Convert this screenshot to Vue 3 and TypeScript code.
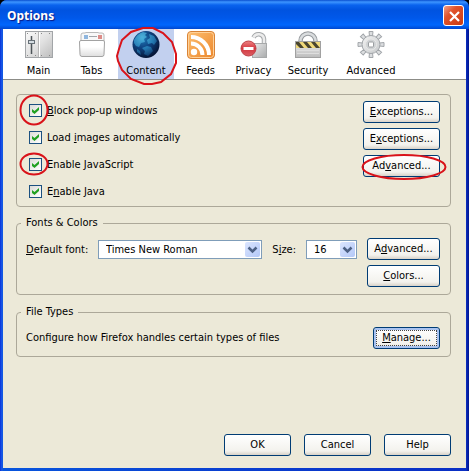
<script setup lang="ts">
import { ref } from 'vue'

type TabId = 'main' | 'tabs' | 'content' | 'feeds' | 'privacy' | 'security' | 'advanced'

interface Tab {
  id: TabId
  label: string
  size: 'small' | 'medium' | 'large'
}

// A label is split around its access key: [before, key, after]
type KeyLabel = [string, string, string]

interface Option {
  id: string
  label: KeyLabel
  mark?: 'round' | 'flat'
}

const tabs: Tab[] = [
  { id: 'main', label: 'Main', size: 'small' },
  { id: 'tabs', label: 'Tabs', size: 'small' },
  { id: 'content', label: 'Content', size: 'medium' },
  { id: 'feeds', label: 'Feeds', size: 'small' },
  { id: 'privacy', label: 'Privacy', size: 'small' },
  { id: 'security', label: 'Security', size: 'medium' },
  { id: 'advanced', label: 'Advanced', size: 'large' },
]

const options: Option[] = [
  { id: 'popups', label: ['', 'B', 'lock pop-up windows'], mark: 'round' },
  { id: 'images', label: ['Load ', 'i', 'mages automatically'] },
  { id: 'script', label: ['Enable ', 'J', 'avaScript'], mark: 'flat' },
  { id: 'java', label: ['E', 'n', 'able Java'] },
]

const active = ref<TabId>('content')
const enabled = ref<string[]>(['popups', 'images', 'script', 'java'])
const font = ref('Times New Roman')
const size = ref('16')
</script>

<template>
  <main class="window">
    <header class="titlebar">
      <h1>Options</h1>
      <button class="close" type="button" aria-label="Close">
        <svg viewBox="0 0 21 21" width="21" height="21"><path d="M6 6l9 9M15 6l-9 9" stroke="#fff" stroke-width="2.2" /></svg>
      </button>
    </header>

    <nav class="toolbar">
      <button
        v-for="tab in tabs"
        :key="tab.id"
        type="button"
        class="tab"
        :class="[tab.size, { active: active === tab.id }]"
        @click="active = tab.id"
      >
        <svg v-if="tab.id === 'main'" class="icon" viewBox="0 0 28 28">
          <defs><linearGradient id="gm" x1="0" y1="0" x2="1" y2="1"><stop offset="0" stop-color="#fafafa" /><stop offset=".5" stop-color="#e2e2e2" /><stop offset="1" stop-color="#bcbcbc" /></linearGradient></defs>
          <rect x=".5" y=".5" width="27" height="26" fill="url(#gm)" stroke="#a2a5a8" />
          <path d="M13.500 1v25" stroke="#b5b5b5" /><path d="M14.500 1v25" stroke="#fff" />
          <path d="M6.500 5v18" stroke="#4e5559" stroke-width="1.500" />
          <rect x="3.500" y="9.500" width="6" height="3" fill="#d5dde2" stroke="#687178" />
          <path d="M2 2.500h1M10 2.500h1M16 2.500h1M24 2.500h1M2 24.500h1M10 24.500h1M16 24.500h1M24 24.500h1" stroke="#888" />
        </svg>
        <svg v-else-if="tab.id === 'tabs'" class="icon" viewBox="0 0 28 28">
          <defs><linearGradient id="gt" x1="0" y1="0" x2="0" y2="1"><stop offset=".4" stop-color="#fff" /><stop offset="1" stop-color="#dedede" /></linearGradient></defs>
          <path d="M3 10V4q0-2 2-2h2l1-.5h12l1 .5h3q2 0 2 2v6" fill="#f8f8f8" stroke="#b8b8b8" />
          <rect x="6" y="4" width="4" height="4" fill="#8fb6de" /><rect x="20" y="4" width="4" height="4" fill="#dd8c88" />
          <path d="M11 5.500h8" stroke="#a3a6aa" />
          <path d="M1.500 11q0-1.500 1.500-1.500h22q1.500 0 1.500 1.500l-.5 12.500q0 2-2 2h-20q-2 0-2-2z" fill="url(#gt)" stroke="#a2a2a2" />
        </svg>
        <svg v-else-if="tab.id === 'content'" class="icon" viewBox="0 0 28 28">
          <defs>
            <radialGradient id="gc" cx=".38" cy=".3" r=".72"><stop offset="0" stop-color="#1f78b5" /><stop offset=".45" stop-color="#0f4382" /><stop offset="1" stop-color="#051333" /></radialGradient>
            <radialGradient id="gl" gradientUnits="userSpaceOnUse" cx="10" cy="6" r="20"><stop offset="0" stop-color="#5cc6ea" /><stop offset=".6" stop-color="#2b8cc4" /><stop offset="1" stop-color="#12437a" /></radialGradient>
          </defs>
          <circle cx="14" cy="13.500" r="13.500" fill="url(#gc)" />
          <path d="M2 9Q5 3 11 1l4 1-2 2 2 2-3 2 1 3-4 1-2 4-3-1-2-3zM17 3l5 2 3 5-3 4-2-2-4 1-1-4 3-2zM15 15l4 1 2 4-5 5-4-2 1-3-3-3zM5 18l3 2 1 4-4-3z" fill="url(#gl)" opacity=".75" />
        </svg>
        <svg v-else-if="tab.id === 'feeds'" class="icon" viewBox="0 0 28 28">
          <defs><linearGradient id="gf" x1="0" y1="0" x2="1" y2="1"><stop offset="0" stop-color="#fdc073" /><stop offset="1" stop-color="#ec8529" /></linearGradient></defs>
          <rect x=".5" y=".5" width="27" height="27" rx="3.500" fill="url(#gf)" stroke="#d98336" />
          <rect x="1.500" y="1.500" width="25" height="25" rx="3" fill="none" stroke="#ffd29a" />
          <circle cx="7" cy="21" r="3.200" fill="#fff" />
          <path d="M4 12.500a11.500 11.500 0 0 1 11.500 11.500M4 6a18 18 0 0 1 18 18" fill="none" stroke="#fff" stroke-width="4" />
        </svg>
        <svg v-else-if="tab.id === 'privacy'" class="icon" viewBox="0 0 28 28">
          <defs>
            <linearGradient id="gp" x1="0" y1="0" x2="1" y2="1"><stop offset="0" stop-color="#ededed" /><stop offset="1" stop-color="#a9abac" /></linearGradient>
            <linearGradient id="gr" x1="0" y1="0" x2="0" y2="1"><stop offset="0" stop-color="#ee8585" /><stop offset=".5" stop-color="#d4353d" /><stop offset="1" stop-color="#db6065" /></linearGradient>
          </defs>
          <path d="M24 13V8a5.500 5.500 0 0 0-10.500-1.500" fill="none" stroke="#a5a8aa" stroke-width="4.500" />
          <path d="M24 13V8a5.500 5.500 0 0 0-10.500-1.500" fill="none" stroke="#ececec" stroke-width="2.500" />
          <rect x="12.500" y="12.500" width="14" height="14" fill="url(#gp)" stroke="#a7a9aa" />
          <circle cx="8.500" cy="17.500" r="7.500" fill="url(#gr)" stroke="#bf4248" />
          <rect x="3.500" y="16" width="10" height="3" fill="#fff" />
        </svg>
        <svg v-else-if="tab.id === 'security'" class="icon" viewBox="0 0 28 28">
          <defs><linearGradient id="gs" x1="0" y1="0" x2="0" y2="1"><stop offset="0" stop-color="#efefef" /><stop offset="1" stop-color="#bcbcbc" /></linearGradient></defs>
          <path d="M6.500 13V10a7.500 7.500 0 0 1 15 0v3" fill="none" stroke="#979b9e" stroke-width="4.500" />
          <path d="M6.500 13V10a7.500 7.500 0 0 1 15 0v3" fill="none" stroke="#d9dcde" stroke-width="2.500" />
          <rect x="1.500" y="10.500" width="25" height="16" fill="url(#gs)" stroke="#a1a1a1" />
          <rect x="2" y="11" width="24" height="6" fill="#f0d97a" />
          <path d="M2 11h3l5 6H6l-4-4zM9 11h4l5 6h-4zM17 11h4l5 6h-4z" fill="#494530" />
          <path d="M3 19.500h22M3 22.500h22" stroke="#dedede" />
        </svg>
        <svg v-else class="icon" viewBox="0 0 28 28">
          <defs><linearGradient id="ga" x1="0" y1="0" x2="1" y2="1"><stop offset="0" stop-color="#f4f4f4" /><stop offset="1" stop-color="#c6c9cb" /></linearGradient></defs>
          <g fill="#dcdee0" stroke="#a2a6aa">
            <g v-for="a in [0, 45, 90, 135, 180, 225, 270, 315]" :key="a" :transform="`rotate(${a} 14 13.5)`"><path d="M12.500 5L12 .5h4L15.500 5z" /></g>
            <circle cx="14" cy="13.500" r="9" fill="url(#ga)" />
          </g>
          <circle cx="14" cy="13.500" r="5.500" fill="#cfd2d4" stroke="#e8e8e8" />
          <rect x="11.500" y="11" width="5" height="5" rx="1" fill="#fff" stroke="#9b9ea1" />
        </svg>
        <span>{{ tab.label }}</span>
        <svg v-if="tab.id === 'content'" class="mark mark-tab" viewBox="0 0 62 60" aria-hidden="true"><path d="M27 2H37L47 7 56 16 60 28V37L55 48 45 56 36 58H28L15 53 6 44 2 35 1 30 3 23 6 14 15 6Z" /></svg>
      </button>
    </nav>

    <div class="panel">
      <fieldset class="group web">
        <div class="checks">
          <label v-for="o in options" :key="o.id" class="check">
            <input v-model="enabled" type="checkbox" :value="o.id" />
            <span>{{ o.label[0] }}<u>{{ o.label[1] }}</u>{{ o.label[2] }}</span>
            <svg v-if="o.mark === 'round'" class="mark mark-round" viewBox="0 0 30 32" aria-hidden="true"><ellipse cx="15" cy="16" rx="13.500" ry="14.500" /></svg>
            <svg v-if="o.mark === 'flat'" class="mark mark-flat" viewBox="0 0 30 24" aria-hidden="true"><ellipse cx="15" cy="12" rx="13.500" ry="10.500" /></svg>
          </label>
        </div>
        <div class="stack">
          <button class="btn" type="button"><u>E</u>xceptions...</button>
          <button class="btn" type="button">E<u>x</u>ceptions...</button>
          <button class="btn" type="button">
            Ad<u>v</u>anced...
            <svg class="mark mark-button" viewBox="0 0 86 28" aria-hidden="true"><ellipse cx="43" cy="14" rx="41.500" ry="12" /></svg>
          </button>
        </div>
      </fieldset>

      <fieldset class="group fonts">
        <legend>Fonts &amp; Colors</legend>
        <div class="fields">
          <label class="font-label" for="font"><u>D</u>efault font:</label>
          <div class="select grow">
            <select id="font" v-model="font">
              <option>Times New Roman</option>
              <option>Arial</option>
            </select>
            <span class="arrow"><svg viewBox="0 0 15 15"><path d="M3.500 5.500l4 4 4-4" /></svg></span>
          </div>
          <label for="size">S<u>i</u>ze:</label>
          <div class="select number">
            <select id="size" v-model="size">
              <option>14</option>
              <option>16</option>
              <option>18</option>
            </select>
            <span class="arrow"><svg viewBox="0 0 15 15"><path d="M3.500 5.500l4 4 4-4" /></svg></span>
          </div>
        </div>
        <div class="stack">
          <button class="btn" type="button">A<u>d</u>vanced...</button>
          <button class="btn" type="button"><u>C</u>olors...</button>
        </div>
      </fieldset>

      <fieldset class="group files">
        <legend>File Types</legend>
        <p>Configure how Firefox handles certain types of files</p>
        <button class="btn default" type="button"><u>M</u>anage...</button>
      </fieldset>

      <footer class="actions">
        <button class="btn" type="button">OK</button>
        <button class="btn" type="button">Cancel</button>
        <button class="btn" type="button">Help</button>
      </footer>
    </div>
  </main>
</template>

<style>
body {
  background: #000;
}
</style>

<style scoped>
.window,
.window * {
  box-sizing: border-box;
}

.window {
  display: flex;
  flex-direction: column;
  min-height: 100vh;
  padding: 0 3px 3px;
  overflow: hidden;
  border-radius: 7px 7px 0 0;
  background: linear-gradient(90deg, #0831d9 0, #1c5ce8 2px, #0855dd 3px, #0a3fd0 50%, #0a2fc4 calc(100% - 3px), #00138c 100%);
  color: #000;
  font: 11px/14px "DejaVu Sans Condensed", Tahoma, sans-serif;
}

button,
select {
  margin: 0;
  color: inherit;
  font: inherit;
}

u {
  text-underline-offset: 1px;
}

.titlebar {
  display: flex;
  align-items: center;
  justify-content: space-between;
  height: 29px;
  margin: 0 -3px;
  padding: 2px 5px 0 7px;
  background: linear-gradient(180deg, #0a4fd0 0, #3d95ff 2px, #0a63ee 5px, #0053e0 10px, #0058ea 18px, #0066fd 25px, #0047cf 29px);
}

.titlebar h1 {
  margin: 0;
  color: #fff;
  font: bold 12px/18px "Noto Sans", "Trebuchet MS", sans-serif;
  text-shadow: 1px 1px 1px #0a1883;
}

.close {
  display: grid;
  place-items: center;
  width: 21px;
  height: 21px;
  padding: 0;
  border: 1px solid #fff;
  border-radius: 3px;
  background: linear-gradient(135deg, #f0a08a, #e1532c 35%, #c93a12);
}

.toolbar {
  display: flex;
  height: 51px;
  padding-left: 9px;
  border-bottom: 1px solid #8c8c87;
  background: #fff;
}

.tab {
  position: relative;
  display: flex;
  flex-direction: column;
  align-items: center;
  gap: 5px;
  height: 50px;
  padding: 2px 0 0;
  border: 0;
  background: transparent;
}

.tab.small {
  width: 53px;
}

.tab.medium {
  width: 56px;
}

.tab.large {
  width: 70px;
}

.tab.active {
  background: #c2d0ef;
}

.icon {
  flex: none;
  width: 28px;
  height: 28px;
}

.mark {
  position: absolute;
  z-index: 1;
  overflow: visible;
  fill: none;
  stroke: #d9131a;
  stroke-width: 2;
  pointer-events: none;
}

.mark-tab {
  top: -3px;
  left: -2px;
  width: 62px;
  height: 60px;
}

.mark-round {
  top: -3px;
  left: -10px;
  width: 30px;
  height: 32px;
}

.mark-flat {
  top: 1px;
  left: -10px;
  width: 30px;
  height: 24px;
}

.mark-button {
  top: -3px;
  left: -3px;
  width: 86px;
  height: 28px;
}

.panel {
  display: flex;
  flex: 1;
  flex-direction: column;
  padding: 14px 15px 12px 13px;
  background: #ece9d8;
}

.group {
  display: flex;
  justify-content: space-between;
  min-width: 0;
  margin: 0;
  padding: 0 10px 0 9px;
  border: 1px solid #aca899;
  border-radius: 4px;
}

.group legend {
  margin-left: -5px;
  padding: 0 5px;
}

.web {
  padding: 2px 10px 1px 12px;
}

.web .stack {
  width: 77px;
  padding-top: 4px;
}

.check {
  position: relative;
  display: flex;
  align-items: center;
  gap: 5px;
  height: 27px;
}

.check input {
  display: grid;
  place-items: center;
  width: 13px;
  height: 13px;
  margin: 0;
  border: 1px solid #1c5180;
  background: linear-gradient(135deg, #dcdcd7, #fff);
  appearance: none;
}

.check input:checked::after {
  width: 7px;
  height: 7px;
  background: #21a121;
  clip-path: polygon(0 28%, 36% 58%, 100% 0, 100% 42%, 36% 100%, 0 70%);
  content: "";
}

.stack {
  display: flex;
  flex-direction: column;
  gap: 5px;
}

.btn {
  position: relative;
  height: 22px;
  padding: 0;
  border: 1px solid #003c74;
  border-radius: 3px;
  background: linear-gradient(180deg, #fff, #f3f2ed 80%, #d8d2c8);
  white-space: nowrap;
}

.fonts {
  gap: 10px;
  margin-top: 9px;
  padding-bottom: 7px;
}

.fonts .stack {
  width: 73px;
  padding-top: 8px;
}

.fields {
  display: flex;
  flex: 1;
  align-items: center;
  align-self: flex-start;
  gap: 10px;
  padding-top: 10px;
}

.font-label {
  width: 62px;
  white-space: nowrap;
}

.select {
  position: relative;
}

.grow {
  flex: 1;
}

.number {
  width: 51px;
}

.select select {
  display: block;
  width: 100%;
  height: 19px;
  padding: 0 18px 0 7px;
  border: 1px solid #7f9db9;
  border-radius: 0;
  background: #fff;
  appearance: none;
}

.arrow {
  position: absolute;
  top: 2px;
  right: 2px;
  width: 15px;
  height: 15px;
  border-radius: 2px;
  background: linear-gradient(135deg, #dbe5fe, #b3c8f8);
  pointer-events: none;
}

.arrow svg {
  display: block;
  fill: none;
  stroke: #4d6185;
  stroke-width: 2.5;
}

.files {
  align-items: center;
  margin-top: 10px;
  padding-top: 8px;
  padding-bottom: 7px;
}

.files p {
  margin: 0;
}

.files .btn {
  width: 67px;
}

.files .default {
  box-shadow: inset 0 0 0 2px #a9c3f0;
}

.default::after {
  position: absolute;
  inset: 2px;
  border: 1px dotted #444;
  content: "";
}

.actions {
  display: flex;
  justify-content: flex-end;
  gap: 13px;
  margin-top: auto;
}

.actions .btn {
  width: 67px;
}
</style>
